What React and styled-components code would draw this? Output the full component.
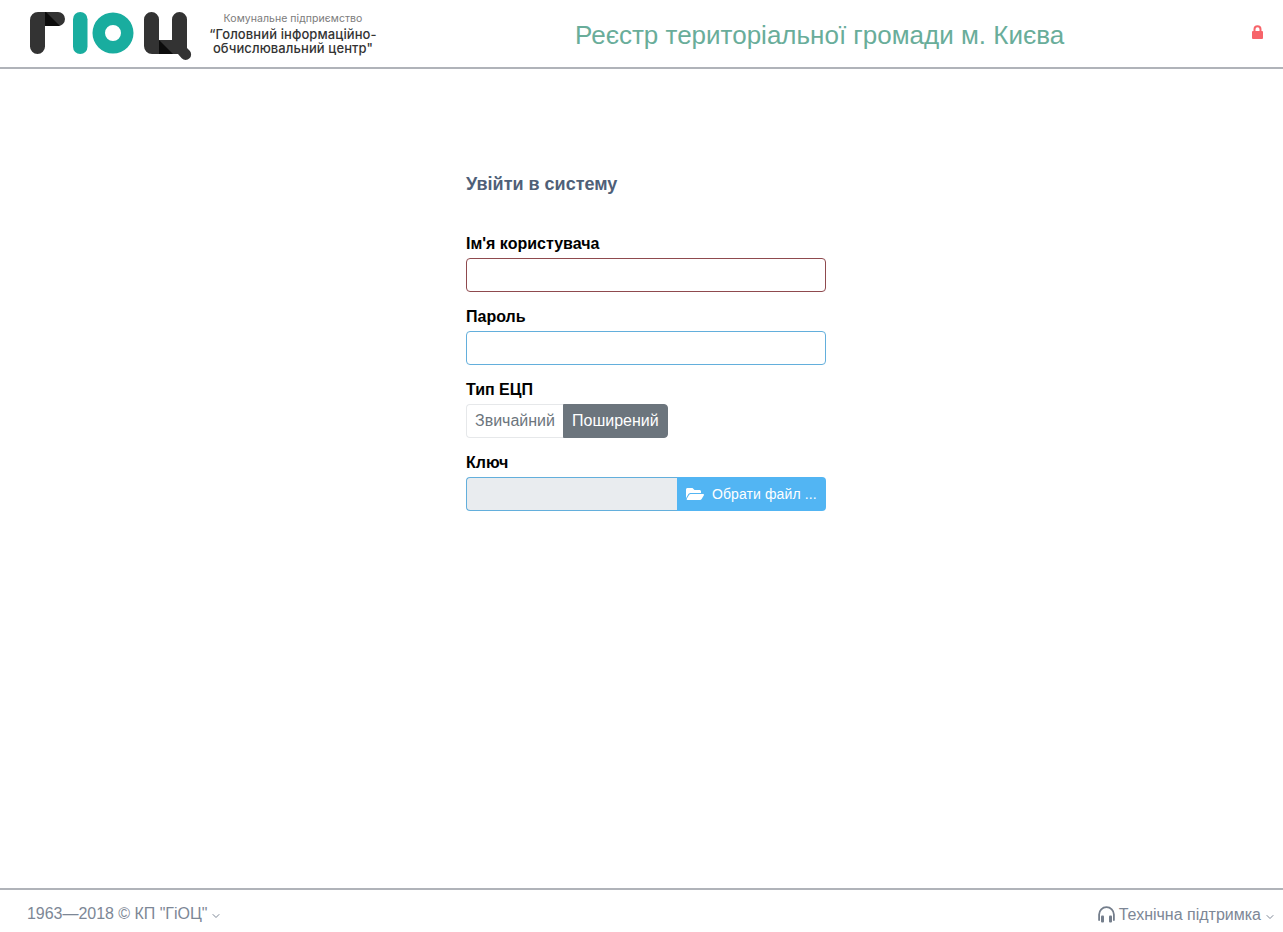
import React from "react";
import styled, { createGlobalStyle } from "styled-components";
import { FaFolderOpen } from "react-icons/fa";
import { FiChevronDown } from "react-icons/fi";

const Global = createGlobalStyle`
  html, body { margin: 0; padding: 0; background: #fff; }
  body { font-family: "Liberation Sans", Arial, sans-serif; font-size: 16px; color: #000; }
  * { box-sizing: border-box; }
`;

const Page = styled.div`
  height: 932px;
  display: flex;
  flex-direction: column;
  overflow: hidden;
`;

const Header = styled.header`
  height: 69px;
  flex: none;
  display: flex;
  align-items: flex-start;
  border-bottom: 2px solid #b0b3b9;
  padding: 12px 20px 0 30px;
`;

const LogoMark = styled.svg`
  width: 162px;
  height: 48px;
  flex: none;
  display: block;
`;

const LogoText = styled.div`
  margin-left: 16px;
  width: 170px;
  flex: none;
  text-align: center;
  font-family: Inter, "Noto Sans", sans-serif;
  color: #333;
  margin-top: 1px;
`;

const LogoSmall = styled.div`
  font-size: 10.5px;
  line-height: 12px;
  color: #7b7b7b;
  font-weight: 400;
  height: 14px;
  letter-spacing: 0.05px;
`;

const LogoBig = styled.div`
  font-size: 13px;
  line-height: 14px;
  font-weight: 500;
  letter-spacing: 0.1px;
  white-space: nowrap;
`;

const Title = styled.h1`
  margin: 7px 0 0 197px;
  font-size: 26px;
  line-height: 32px;
  font-weight: 400;
  color: #69ad9a;
  white-space: nowrap;
`;

const LockIcon = styled.svg`
  display: block;
  margin-left: auto;
  margin-top: 13px;
  width: 11px;
  height: 14px;
  flex: none;
`;

const Main = styled.main`
  flex: 1;
  padding: 104px 0 0 466px;
`;

const Form = styled.form`
  width: 360px;
  display: flex;
  flex-direction: column;
`;

const Heading = styled.h2`
  margin: 0 0 37px;
  font-size: 18px;
  line-height: 22px;
  font-weight: 700;
  color: #4f6078;
`;

const Field = styled.div`
  margin-bottom: 13px;
`;

const Label = styled.label`
  display: block;
  font-size: 16px;
  line-height: 24px;
  font-weight: 700;
  height: 26px;
  color: #000;
`;

const Input = styled.input`
  display: block;
  width: 100%;
  height: 34px;
  border: 1px solid ${p => (p.$invalid ? "#8f4a4e" : "#63afdc")};
  border-radius: 4px;
  background: #fff;
  outline: none;
`;

const Toggle = styled.div`
  display: inline-flex;
  height: 34px;
`;

const ToggleButton = styled.button`
  height: 34px;
  padding: 0 8px;
  font: 400 16px "Liberation Sans", Arial, sans-serif;
  border: 1px solid ${p => (p.$active ? "#6c757d" : "#e6e8ea")};
  border-right-width: ${p => (p.$active ? "1px" : "0")};
  color: ${p => (p.$active ? "#fff" : "#6c757d")};
  background: ${p => (p.$active ? "#6c757d" : "#fff")};
  border-radius: ${p => (p.$active ? "0 4px 4px 0" : "4px 0 0 4px")};
`;

const FileGroup = styled.div`
  display: flex;
  height: 34px;
`;

const FileName = styled.div`
  flex: 1;
  background: #e9ecef;
  border: 1px solid #63afdc;
  border-right: 0;
  border-radius: 4px 0 0 4px;
`;

const FileButton = styled.button`
  width: 149px;
  flex: none;
  height: 34px;
  display: flex;
  align-items: center;
  gap: 8px;
  padding: 0 0 0 9px;
  background: #52b5f3;
  color: #fff;
  border: 0;
  border-radius: 0 4px 4px 0;
  font: 400 14px "Liberation Sans", Arial, sans-serif;
  letter-spacing: 0.1px;
  white-space: nowrap;
  svg { width: 18px; height: 16px; flex: none; }
`;

const Footer = styled.footer`
  height: 44px;
  flex: none;
  border-top: 2px solid #b0b3b9;
  padding: 14px 7px 0 27px;
  display: flex;
  justify-content: space-between;
  align-items: flex-start;
  color: #7d8796;
  font-size: 16px;
  line-height: 20px;
`;

const FooterItem = styled.a`
  display: flex;
  align-items: center;
  color: inherit;
  white-space: nowrap;
  letter-spacing: ${p => (p.$tight ? "-0.03px" : "0")};
  margin-top: ${p => (p.$low ? "1px" : "0")};
`;

const Caret = styled(FiChevronDown)`
  font-size: 12px;
  margin: 3px 0 0 3px;
  flex: none;
`;

const PhonesIcon = styled.svg`
  width: 17px;
  height: 17px;
  margin: -2px 4px 0 0;
  flex: none;
`;

function Logo() {
  return (
    <LogoMark viewBox="30 12 162 48" aria-label="ГіОЦ">
      <path d="M30 20a8 8 0 0 1 8-8h20a7 7 0 0 1 0 14H45v20.500a7.500 7.500 0 0 1-15 0z" fill="#333" />
      <path d="M45 12h1l14 14H45z" fill="#0c0c0c" />
      <rect x="73" y="12" width="14.500" height="42" rx="7.250" fill="#19ad9f" />
      <path fillRule="evenodd" d="M113 12.500a20.500 20.500 0 1 1 0 41 20.500 20.500 0 0 1 0-41zm0 12.500a8 8 0 1 0 0 16 8 8 0 0 0 0-16z" fill="#19ad9f" />
      <path d="M144 19.500a7.500 7.500 0 0 1 15 0V40h13V19.500a7.500 7.500 0 0 1 15 0V48l2.500 2.500a5.500 5.500 0 0 1-7.800 7.800L178 54H152a8 8 0 0 1-8-8z" fill="#333" />
      <path d="M159 40l14 14H159z" fill="#0c0c0c" />
    </LogoMark>
  );
}

function Lock() {
  return (
    <LockIcon viewBox="0 0 11 14" aria-label="lock">
      <path d="M2.500 7V4.200a3 3 0 0 1 6 0V7" fill="none" stroke="#f7646a" strokeWidth="2" />
      <rect x="0" y="6" width="11" height="8" rx="1" fill="#f7646a" />
    </LockIcon>
  );
}

function Phones() {
  return (
    <PhonesIcon viewBox="0 0 17 17" aria-label="headphones">
      <path d="M1.100 14V8.500a7.400 7.400 0 0 1 14.800 0V14" fill="none" stroke="#747e8c" strokeWidth="1.800" strokeLinecap="round" />
      <rect x="3" y="9.500" width="3" height="7" rx="1" fill="#747e8c" />
      <rect x="11" y="9.500" width="3" height="7" rx="1" fill="#747e8c" />
    </PhonesIcon>
  );
}

export default function App() {
  return (
    <Page>
      <Global />
      <Header>
        <Logo />
        <LogoText>
          <LogoSmall>Комунальне підприємство</LogoSmall>
          <LogoBig>“Головний інформаційно-</LogoBig>
          <LogoBig>обчислювальний центр"</LogoBig>
        </LogoText>
        <Title>Реєстр територіальної громади м. Києва</Title>
        <Lock />
      </Header>
      <Main>
        <Form>
          <Heading>Увійти в систему</Heading>
          <Field>
            <Label>Ім'я користувача</Label>
            <Input $invalid />
          </Field>
          <Field>
            <Label>Пароль</Label>
            <Input type="password" />
          </Field>
          <Field>
            <Label>Тип ЕЦП</Label>
            <Toggle>
              <ToggleButton type="button">Звичайний</ToggleButton>
              <ToggleButton type="button" $active>Поширений</ToggleButton>
            </Toggle>
          </Field>
          <Field>
            <Label>Ключ</Label>
            <FileGroup>
              <FileName />
              <FileButton type="button"><FaFolderOpen />Обрати файл ...</FileButton>
            </FileGroup>
          </Field>
        </Form>
      </Main>
      <Footer>
        <FooterItem $tight>1963—2018 © КП "ГіОЦ"<Caret /></FooterItem>
        <FooterItem $low><Phones />Технічна підтримка<Caret /></FooterItem>
      </Footer>
    </Page>
  );
}
